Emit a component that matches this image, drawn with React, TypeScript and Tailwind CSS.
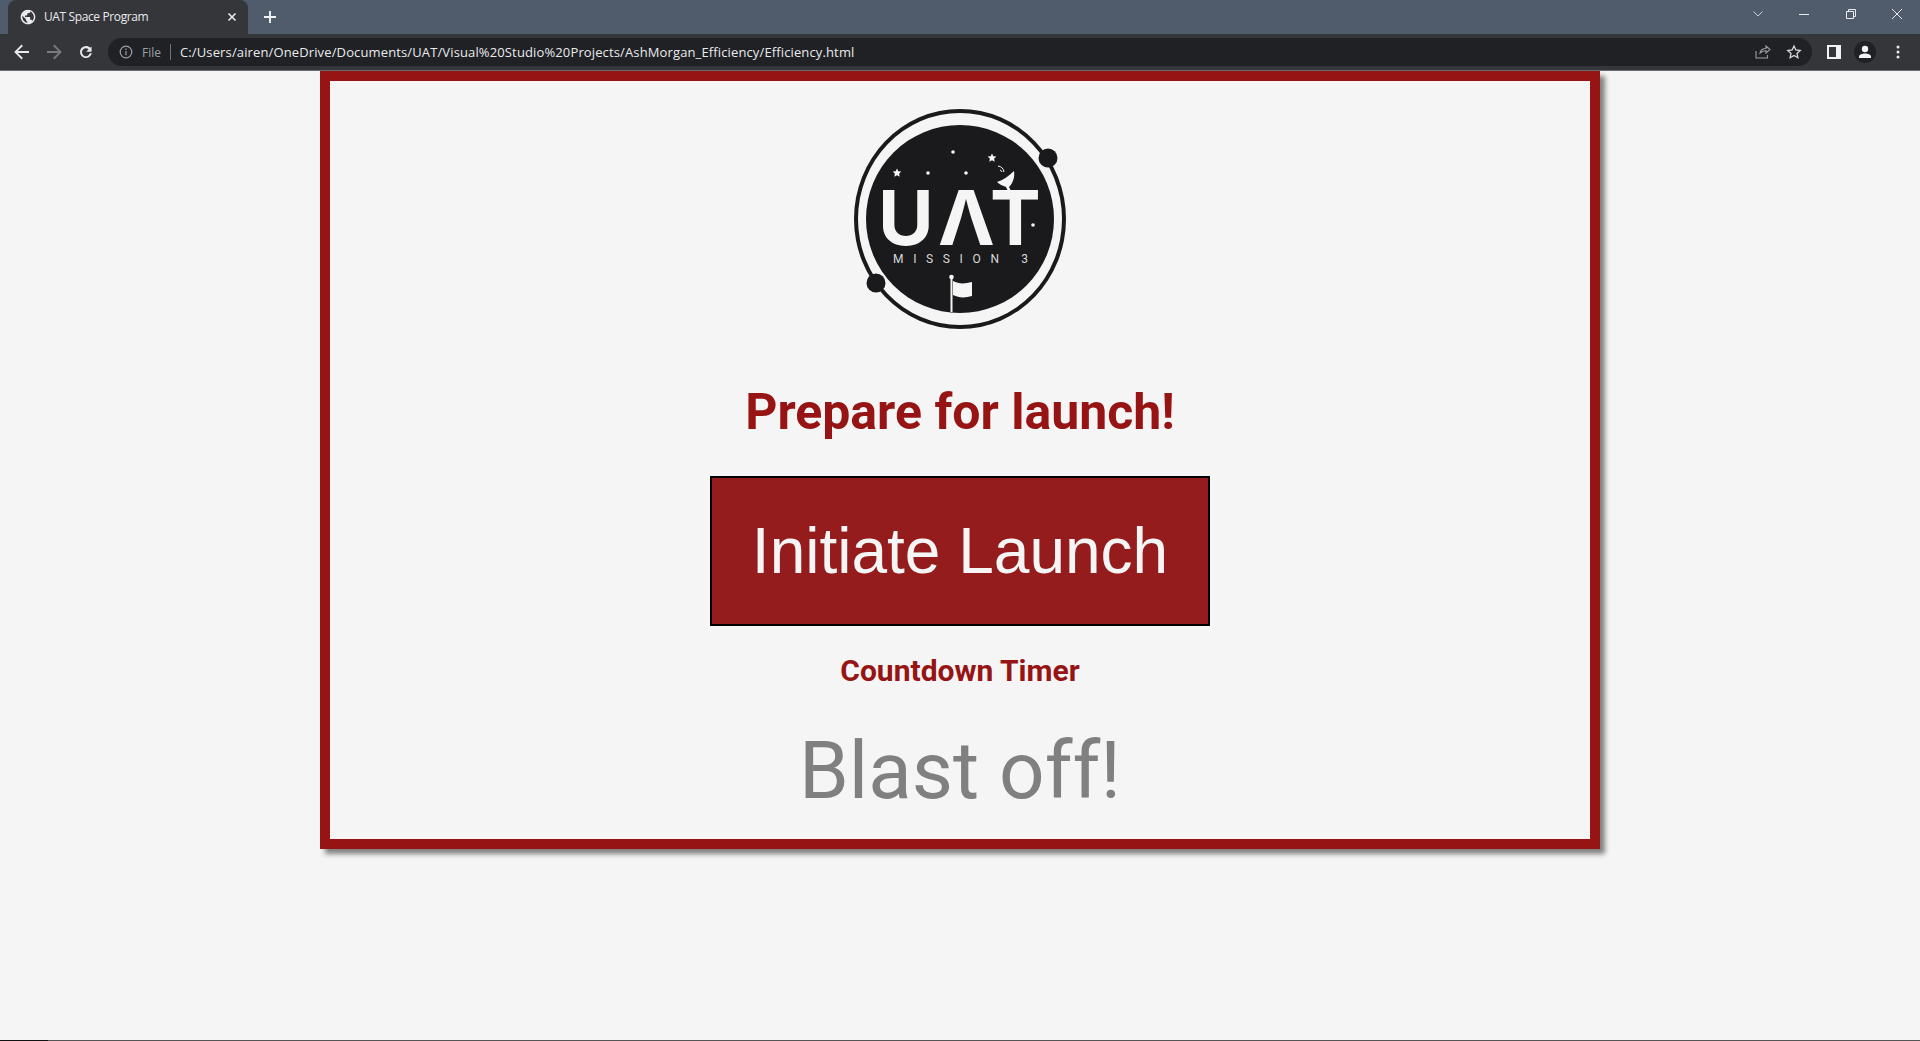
import React from 'react';

const ROBOTO = 'font-["Roboto",sans-serif]';

const TabBar: React.FC = () => (
    <div className="h-[34px] bg-[#505c6c] flex items-end relative shrink-0">
        <div className="ml-2 w-[240px] h-[34px] bg-[#35363a] rounded-t-lg flex items-center pl-[12px] pr-[9px] text-white">
            {/* Favicon */}
            <svg width="16" height="16" viewBox="0 0 24 24" fill="#e8eaed" className="shrink-0">
                <path d="M12 1C5.900 1 1 5.900 1 12s4.900 11 11 11 11-4.900 11-11S18.100 1 12 1zM10.900 20.700C7 20.200 3.500 16.500 3.500 12c0-.7.100-1.300.2-1.900L9 15.300v1.200c0 1.200 1 2.100 2 2.100zm7.600-2.900c-.3-.9-1.100-1.500-2.100-1.500h-1.100v-3.300c0-.6-.5-1.100-1.100-1.100H7.600V9.700h2.200c.6 0 1.100-.5 1.100-1.100V6.400h2.200c1.200 0 2.200-1 2.200-2.200v-.5c3.200 1.300 5.500 4.500 5.500 8.200 0 2.400-1 4.500-2.300 5.900z" />
            </svg>
            <span className="ml-[8px] flex-1 text-xs font-['Open_Sans',sans-serif] tracking-[-0.38px] text-[#e8eaed] whitespace-nowrap">UAT Space Program</span>
            <svg width="10" height="10" viewBox="0 0 10 10" stroke="#e8eaed" strokeWidth="1.6" className="shrink-0 mr-[2px]">
                <path d="M1.500 1.500l7 7M8.500 1.500l-7 7" />
            </svg>
        </div>
        <svg width="12" height="12" viewBox="0 0 12 12" stroke="#f1f3f4" strokeWidth="1.900" className="ml-[16px] mb-[11px]">
            <path d="M6 0v12M0 6h12" />
        </svg>
        <div className="absolute top-0 right-0 h-[28px] flex items-center">
            <svg width="10" height="6" viewBox="0 0 10 6" fill="none" stroke="#cbd0d6" strokeWidth="1" className="mr-[36px]">
                <path d="M.5.5L5 5 9.500.5" />
            </svg>
            <div className="w-[10px] h-px bg-[#e8eaed] mr-[37px]" />
            <svg width="10" height="10" viewBox="0 0 10 10" fill="none" stroke="#e8eaed" strokeWidth="1" className="mr-[36px]">
                <path d="M.5 2.500h7v7h-7zM2.500 2.500v-2h7v7h-2" />
            </svg>
            <svg width="10" height="10" viewBox="0 0 10 10" fill="none" stroke="#e8eaed" strokeWidth="1" className="mr-[18px]">
                <path d="M0 0l10 10M10 0L0 10" />
            </svg>
        </div>
    </div>
);

const Toolbar: React.FC = () => (
    <div className="h-[36px] bg-[#35363a] flex items-center border-b border-[#6a6b70] box-content shrink-0">
        <svg width="16" height="16" viewBox="0 0 16 16" fill="#e8eaed" className="ml-[14px] shrink-0">
            <path d="M15 7H3.800l5.100-5.100L7.600.6.200 8l7.400 7.400 1.300-1.300L3.800 9H15z" />
        </svg>
        <svg width="16" height="16" viewBox="0 0 16 16" fill="#797b80" className="ml-4 shrink-0">
            <path d="M1 7h11.200L7.100 1.900 8.400.6 15.800 8l-7.400 7.400-1.300-1.300L12.200 9H1z" />
        </svg>
        <svg width="16" height="16" viewBox="0 0 24 24" fill="#e8eaed" className="ml-4 shrink-0">
            <path d="M20.300 3.700v8h-8l3.700-3.700A6 6 0 1 0 17.700 14h3.100A9 9 0 1 1 12 3c2.500 0 4.700 1 6.300 2.700z" />
        </svg>
        <div className="ml-[14px] flex-1 h-7 bg-[#202124] rounded-full flex items-center pl-[11px]">
            <svg width="14" height="14" viewBox="0 0 14 14" fill="none" stroke="#9aa0a6" strokeWidth="1.200" className="shrink-0">
                <circle cx="7" cy="7" r="5.800" />
                <path d="M7 6v4.200M7 3.600v1.300" />
            </svg>
            <span className="ml-[9px] mt-px w-[20px] text-xs font-['Open_Sans',sans-serif] text-[#9aa0a6] whitespace-nowrap">File</span>
            <div className="ml-2 w-px h-4 bg-[#6f7277] shrink-0" />
            <span className="ml-[9px] mt-px flex-1 text-[13px] font-['Open_Sans',sans-serif] tracking-[0.13px] text-[#e8eaed] whitespace-nowrap">C:/Users/airen/OneDrive/Documents/UAT/Visual%20Studio%20Projects/AshMorgan_Efficiency/Efficiency.html</span>
            <svg width="16" height="14" viewBox="0 0 16 14" fill="none" stroke="#9aa0a6" strokeWidth="1.100" className="mr-[15px] shrink-0">
                <path d="M1 6v7h11.500v-3M5 8c.5-3 3-4.500 6-4.500V1l4 3.500L11 8V5.800C8.500 5.800 6.500 6.500 5 8z" />
            </svg>
            <svg width="16" height="16" viewBox="0 0 24 24" fill="none" stroke="#d5d7da" strokeWidth="2" className="mr-[10px] shrink-0">
                <path d="M12 3l2.800 6 6.500.7-4.800 4.400 1.300 6.500L12 17.300l-5.800 3.300 1.300-6.500-4.800-4.400 6.500-.7z" />
            </svg>
        </div>
        <div className="ml-[15px] mr-[13px] w-[14px] h-[14px] bg-[#f1f3f4] flex shrink-0 py-0.5 pl-0.5 pr-[5px]">
            <div className="flex-1 bg-[#35363a]" />
        </div>
        <div className="w-[22px] h-[22px] rounded-full bg-[#202124] flex items-center justify-center shrink-0">
            <svg width="14" height="14" viewBox="0 0 14 14" fill="#f1f3f4">
                <circle cx="7" cy="4" r="3.200" />
                <path d="M1 13v-1.500C1 9.500 4.500 8.500 7 8.500s6 1 6 3V13z" />
            </svg>
        </div>
        <svg width="4" height="14" viewBox="0 0 4 14" fill="#e8eaed" className="ml-[20px] mr-[20px] shrink-0">
            <circle cx="2" cy="2" r="1.500" />
            <circle cx="2" cy="7" r="1.500" />
            <circle cx="2" cy="12" r="1.500" />
        </svg>
    </div>
);

const Star: React.FC<{ x: number; y: number; r: number }> = ({ x, y, r }) => (
    <path
        transform={`translate(${x} ${y}) scale(${r})`}
        fill="#f5f5f5"
        d="M0-1l.29.6.66.09-.48.46.12.66L0 .5l-.59.31.12-.66-.48-.46.66-.09z"
    />
);

const Logo: React.FC = () => (
    <svg width="224" height="226" viewBox="0 0 224 226" className="block mx-auto">
        <ellipse cx="112" cy="113" rx="106" ry="110" fill="#1a1a1c" />
        <ellipse cx="112" cy="113" rx="102" ry="106" fill="#f5f5f5" />
        <ellipse cx="112" cy="113" rx="94" ry="94" fill="#1a1a1c" />
        <circle cx="200" cy="52" r="9.500" fill="#1a1a1c" />
        <circle cx="28" cy="177" r="9.500" fill="#1a1a1c" />
        <Star x={49} y={67} r={4.500} />
        <Star x={144} y={52} r={4.500} />
        <circle cx="80" cy="67" r="1.800" fill="#f5f5f5" />
        <circle cx="118" cy="67" r="1.800" fill="#f5f5f5" />
        <circle cx="105" cy="46" r="1.800" fill="#f5f5f5" />
        <circle cx="185" cy="119" r="1.800" fill="#f5f5f5" />
        {/* Dish */}
        <path d="M149 76c6-2 12-6 17-11 1 6-1 12-5 16l2 4h-3l-2-4c-3-1-7-3-9-5z" fill="#f5f5f5" />
        <path d="M150 60a7 7 0 0 1 6 6M152 64a3 3 0 0 1 2 2" fill="none" stroke="#f5f5f5" strokeWidth="1" />
        <text x="30 90 142" y="139" fontFamily="Inter, sans-serif" fontWeight="700" fontSize="76" fill="#f5f5f5">UΛT</text>
        <text x="45" y="157" fontFamily="Roboto, sans-serif" fontSize="12" fill="#d8d8d8" textLength="135" lengthAdjust="spacing">MISSION 3</text>
        {/* Flag */}
        <path d="M102.500 171h2v35h-2z" fill="#f5f5f5" />
        <circle cx="103.500" cy="171" r="2.300" fill="#f5f5f5" />
        <path d="M105 175c6 3 11 3 19 1v14c-7 2-13 2-19-1z" fill="#f5f5f5" />
    </svg>
);

export default function App() {
    return (
        <div className="h-[1041px] overflow-hidden flex flex-col bg-[#f5f5f5]">
            <TabBar />
            <Toolbar />
            <main className="w-[1280px] h-[778px] mx-auto border-[10px] border-[#961414] shadow-[5px_5px_5px_#808080] flex flex-col items-center shrink-0">
                <div className="mt-[25px]">
                    <Logo />
                </div>
                <h1 className={`mt-[52px] text-[50px] leading-[56px] font-bold text-[#961414] ${ROBOTO}`}>Prepare for launch!</h1>
                <button className="mt-[36px] w-[500px] h-[150px] border-2 border-black bg-[#951c1c] text-[64px] text-[#f5f5f5] font-['Liberation_Sans',sans-serif]">
                    Initiate Launch
                </button>
                <h2 className={`mt-[28px] text-[30px] leading-[34px] font-bold text-[#961414] ${ROBOTO}`}>Countdown Timer</h2>
                <p className={`mt-[36px] text-[80px] leading-[94px] text-[#808080] ${ROBOTO}`}>Blast off!</p>
            </main>
            <div className="flex-1" />
            <div className="h-px flex shrink-0 bg-[#555555]">
                <div className="w-12 bg-[#111111]" />
            </div>
        </div>
    );
}
